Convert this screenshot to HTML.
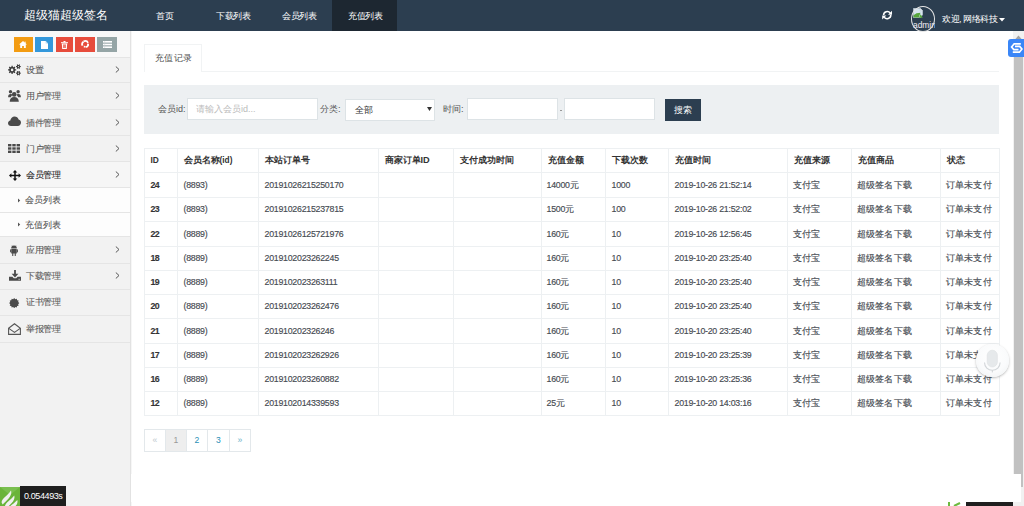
<!DOCTYPE html>
<html><head><meta charset="utf-8">
<style>
*{box-sizing:border-box;margin:0;padding:0}
html,body{width:1024px;height:506px;overflow:hidden;background:#fff;font-family:"Liberation Sans",sans-serif;color:#555}
.abs{position:absolute}
#hdr{position:absolute;left:0;top:0;width:1024px;height:31px;background:#2c3e50}
#hdr .t{position:absolute;color:#fff;white-space:nowrap;line-height:1}
#logo{left:24px;top:9px;font-size:12px}
.nav{top:12px;font-size:9px;letter-spacing:-.5px}
#navact{position:absolute;left:332px;top:0;width:65px;height:31px;background:#1d2731}
#side{position:absolute;left:0;top:31px;width:130px;height:475px;background:#f2f2f2}
.sc{position:absolute;top:6px;height:15px}
.mi{position:absolute;left:0;width:130px;border-bottom:1px solid #e2e2e2}
.mt{font-size:9px;letter-spacing:-0.5px;-webkit-text-stroke:.08px currentColor;line-height:10px;white-space:nowrap}
.mi .tx{position:absolute;left:26px;font-size:9px;color:#555;line-height:1;white-space:nowrap}
.mi .ch{position:absolute;left:115px;width:5px;height:6px}
.mi svg.ic{position:absolute}
#content{position:absolute;left:131px;top:31px;width:882px;height:475px;background:#fff}
.tbl{position:absolute;left:144px;top:148px;border-collapse:collapse;table-layout:fixed}
.tbl td,.tbl th{border:1px solid #edf0f2;padding:0 0 2px 5.5px;line-height:12px;text-align:left;white-space:nowrap;overflow:hidden;font-weight:normal;vertical-align:middle}
.tbl th{font-weight:bold;color:#333;font-size:9.2px}
.tbl td{color:#464b52;-webkit-text-stroke:.15px #464b52;font-size:9.2px;padding-bottom:1px;padding-left:4.5px;letter-spacing:.25px}
.tbl td.l{padding-left:5.5px}
.tbl td.l,.tbl .l{font-size:8.8px;letter-spacing:-.25px}
.l{letter-spacing:-0.5px}
.tbl td.b{font-weight:bold;color:#333;letter-spacing:-.6px}
.lb{font-size:9.2px;color:#555;line-height:1;white-space:nowrap}
.l2{font-size:9px}
.inp{background:#fff;border:1px solid #dde3e6}
.pg{top:429px;height:23px;border:1px solid #e3e8eb;font-size:8.6px;line-height:21px;text-align:center;background:#fff}
</style></head><body>
<div id="hdr">
  <div class="t" id="logo">超级猫超级签名</div>
  <div id="navact"></div>
  <div class="t nav" style="left:156px">首页</div>
  <div class="t nav" style="left:216px">下载列表</div>
  <div class="t nav" style="left:282px">会员列表</div>
  <div class="t nav" style="left:348px">充值列表</div>
  <!-- refresh -->
  <svg class="abs" style="left:882px;top:10px" width="10.4" height="10.2" viewBox="0 0 10.4 10.2"><g fill="none" stroke="#fff" stroke-width="1.6"><path d="M1.6 5.1A3.6 3.6 0 0 1 8.2 3.1"/><path d="M8.8 5.1A3.6 3.6 0 0 1 2.2 7.1"/></g><g fill="#fff"><path d="M10.2 0.6V4.8H6z"/><path d="M0.2 9.6V5.4H4.4z"/></g></svg>
  <div class="abs" style="left:911px;top:6px;width:23.5px;height:26px;overflow:hidden">
  <svg class="abs" style="left:1.5px;top:2px" width="10" height="10" viewBox="0 0 10 10"><path d="M0.3 0.3H7.2L9.7 2.8V6.5L7.5 9.7H0.3Z" fill="#d6e4ef" stroke="#b8c4cc" stroke-width="0.5"/><path d="M0.5 9.5V7.2L3.5 5.2 7.5 4.8 5.8 9.5Z" fill="#56a53c"/><path d="M7.2 0.3V2.8H9.7" fill="#eef3f6" stroke="#b8c4cc" stroke-width="0.5"/><path d="M7.6 6.2L9.8 9.8H6" fill="#56a53c"/></svg>
  <div class="t" style="left:2px;top:15px;font-size:8.4px;color:#f4eef6">admin</div>
</div>
<div class="abs" style="left:911px;top:6px;width:24px;height:26px;border:1.2px solid #e6e6e6;border-radius:50%"></div>
<div class="t" style="left:942px;top:14.5px;font-size:9px;letter-spacing:-0.45px">欢迎, 网络科技</div>
  <svg class="abs" style="left:999px;top:18px" width="6" height="4" viewBox="0 0 6 4"><path d="M0 0 H6 L3 3.5 Z" fill="#fff"/></svg>
</div>

<div id="side">
<div class="abs" style="left:0;top:0;width:130px;height:26px;background:#f8f8f8"></div>
<div class="sc" style="left:14px;width:19px;background:#f39c12"></div>
<div class="sc" style="left:35px;width:18px;background:#3498db"></div>
<div class="sc" style="left:56px;width:17px;background:#e74c3c"></div>
<div class="sc" style="left:75px;width:20px;background:#e74c3c"></div>
<div class="sc" style="left:97px;width:20px;background:#95a5a6"></div>
</div>
<div class="abs" style="left:130px;top:31px;width:1px;height:475px;background:#e2e2e2"></div><div class="abs" style="left:131px;top:31px;width:1px;height:475px;background:#f6f6f6"></div>
<svg class="abs" style="left:19px;top:41px" width="8" height="7" viewBox="0 0 8 7"><path fill="#fff" d="M4 0L8 3.6H6.8V7H4.9V5H3.1V7H1.2V3.6H0z"/><rect x="5.6" y="0.6" width="1" height="1.8" fill="#fff"/></svg>
<svg class="abs" style="left:41px;top:40.5px" width="7" height="8" viewBox="0 0 7 8"><path fill="#fff" d="M0 0H4.6L7 2.4V8H0z"/><path fill="#b9dcf3" d="M4.6 0V2.4H7z"/></svg>
<svg class="abs" style="left:61px;top:40.5px" width="7" height="8" viewBox="0 0 7 8"><g fill="#fff"><rect x="0" y="1.2" width="7" height="1"/><rect x="2.5" y="0" width="2" height="1.2"/><path d="M.8 2.6H6.2L5.8 8H1.2z"/></g><g fill="#e74c3c"><rect x="2" y="3.4" width=".7" height="3.6"/><rect x="3.15" y="3.4" width=".7" height="3.6"/><rect x="4.3" y="3.4" width=".7" height="3.6"/></g></svg>
<svg class="abs" style="left:81px;top:40.2px" width="8.4" height="8" viewBox="0 0 8.4 8"><g fill="none" stroke="#fff" stroke-width="1.8"><path d="M1.5 5.6A3.1 3.1 0 0 1 2.4 1.7"/><path d="M3.4 1.1A3.1 3.1 0 0 1 7 2.8"/><path d="M7.3 4.3A3.1 3.1 0 0 1 4.6 7.1"/></g><g fill="#fff"><path d="M2.6 0.1L4.6 1.3 2.4 2.8z"/><path d="M8.2 4.9L6.9 2.9 6 5.1z"/><path d="M2.9 7.9L4.8 6.4 2.8 5.5z"/></g></svg>
<svg class="abs" style="left:103px;top:40.7px" width="9" height="7" viewBox="0 0 9 7"><g fill="#fff"><rect x="0" y="0" width="9" height="1.6"/><rect x="0" y="2.7" width="9" height="1.6"/><rect x="0" y="5.4" width="9" height="1.6"/></g><g fill="#c8d0d0"><rect x="1.6" y="0" width=".5" height="7"/></g></svg>
<div class="abs" style="left:0;top:57px;width:130px;height:25px;background:#f2f2f2"></div>
<div class="abs" style="left:0;top:82px;width:130px;height:27px;background:#f2f2f2"></div>
<div class="abs" style="left:0;top:109px;width:130px;height:26px;background:#f2f2f2"></div>
<div class="abs" style="left:0;top:135px;width:130px;height:26px;background:#f2f2f2"></div>
<div class="abs" style="left:0;top:161px;width:130px;height:26px;background:#f6f6f6"></div>
<div class="abs" style="left:0;top:187px;width:130px;height:25px;background:#fdfdfd"></div>
<div class="abs" style="left:0;top:212px;width:130px;height:24px;background:#fdfdfd"></div>
<div class="abs" style="left:0;top:236px;width:130px;height:27px;background:#f2f2f2"></div>
<div class="abs" style="left:0;top:263px;width:130px;height:26px;background:#f2f2f2"></div>
<div class="abs" style="left:0;top:289px;width:130px;height:26px;background:#f2f2f2"></div>
<div class="abs" style="left:0;top:315px;width:130px;height:27px;background:#f2f2f2"></div>
<div class="abs" style="left:0;top:57px;width:130px;height:1px;background:#e5e5e5"></div>
<div class="abs" style="left:0;top:82px;width:130px;height:1px;background:#e5e5e5"></div>
<div class="abs" style="left:0;top:109px;width:130px;height:1px;background:#e5e5e5"></div>
<div class="abs" style="left:0;top:135px;width:130px;height:1px;background:#e5e5e5"></div>
<div class="abs" style="left:0;top:161px;width:130px;height:1px;background:#e5e5e5"></div>
<div class="abs" style="left:0;top:187px;width:130px;height:1px;background:#e5e5e5"></div>
<div class="abs" style="left:0;top:212px;width:130px;height:1px;background:#e5e5e5"></div>
<div class="abs" style="left:0;top:236px;width:130px;height:1px;background:#e5e5e5"></div>
<div class="abs" style="left:0;top:263px;width:130px;height:1px;background:#e5e5e5"></div>
<div class="abs" style="left:0;top:289px;width:130px;height:1px;background:#e5e5e5"></div>
<div class="abs" style="left:0;top:315px;width:130px;height:1px;background:#e5e5e5"></div>
<div class="abs" style="left:0;top:342px;width:130px;height:1px;background:#e5e5e5"></div>
<div class="abs mt" style="left:26px;top:64.5px; color:#555">设置</div>
<svg class="abs" style="left:115px;top:65.5px" width="5" height="7" viewBox="0 0 5 7"><path d="M.8.5L4 3.5.8 6.5" fill="none" stroke="#555" stroke-width="1"/></svg>
<svg class="abs" style="left:7px;top:64px" width="14" height="12" viewBox="0 0 14 12"><path fill="#3a3a3a" fill-rule="evenodd" d="M8.01 5.19 L9.16 5.31 L9.16 6.49 L8.01 6.61 L7.66 7.46 L8.39 8.35 L7.55 9.19 L6.66 8.46 L5.81 8.81 L5.69 9.96 L4.51 9.96 L4.39 8.81 L3.54 8.46 L2.65 9.19 L1.81 8.35 L2.54 7.46 L2.19 6.61 L1.04 6.49 L1.04 5.31 L2.19 5.19 L2.54 4.34 L1.81 3.45 L2.65 2.61 L3.54 3.34 L4.39 2.99 L4.51 1.84 L5.69 1.84 L5.81 2.99 L6.66 3.34 L7.55 2.61 L8.39 3.45 L7.66 4.34Z M6.40 5.90 A1.3 1.3 0 1 0 3.80 5.90 A1.3 1.3 0 1 0 6.40 5.90Z M13.00 2.02 L13.74 2.08 L13.74 3.12 L13.00 3.18 L12.70 3.70 L13.02 4.37 L12.12 4.89 L11.70 4.27 L11.10 4.27 L10.68 4.89 L9.78 4.37 L10.10 3.70 L9.80 3.18 L9.06 3.12 L9.06 2.08 L9.80 2.02 L10.10 1.50 L9.78 0.83 L10.68 0.31 L11.10 0.93 L11.70 0.93 L12.12 0.31 L13.02 0.83 L12.70 1.50Z M12.00 2.60 A0.6 0.6 0 1 0 10.80 2.60 A0.6 0.6 0 1 0 12.00 2.60Z M13.00 8.62 L13.74 8.68 L13.74 9.72 L13.00 9.78 L12.70 10.30 L13.02 10.97 L12.12 11.49 L11.70 10.87 L11.10 10.87 L10.68 11.49 L9.78 10.97 L10.10 10.30 L9.80 9.78 L9.06 9.72 L9.06 8.68 L9.80 8.62 L10.10 8.10 L9.78 7.43 L10.68 6.91 L11.10 7.53 L11.70 7.53 L12.12 6.91 L13.02 7.43 L12.70 8.10Z M12.00 9.20 A0.6 0.6 0 1 0 10.80 9.20 A0.6 0.6 0 1 0 12.00 9.20Z"/></svg>
<div class="abs mt" style="left:26px;top:90.5px; color:#555">用户管理</div>
<svg class="abs" style="left:115px;top:91.5px" width="5" height="7" viewBox="0 0 5 7"><path d="M.8.5L4 3.5.8 6.5" fill="none" stroke="#555" stroke-width="1"/></svg>
<svg class="abs" style="left:7px;top:88px" width="15" height="15" viewBox="0 0 15 15"><g fill="#4a4a4a"><circle cx="3.5" cy="3.7" r="1.7"/><circle cx="11.1" cy="3.7" r="1.7"/><path d="M1.1 9.2c0-2.2.9-3.3 2.4-3.3 1 0 1.6.4 2 1-.9.6-1.4 1.3-1.6 2.3z"/><path d="M13.9 9.2c0-2.2-.9-3.3-2.4-3.3-1 0-1.6.4-2 1 .9.6 1.4 1.3 1.6 2.3z"/><circle cx="7.2" cy="6.4" r="2.3"/><path d="M2.7 13.8c0-3.2 1.6-4.9 4.5-4.9s4.6 1.7 4.6 4.9z"/></g></svg>
<div class="abs mt" style="left:26px;top:117.5px; color:#555">插件管理</div>
<svg class="abs" style="left:115px;top:118.5px" width="5" height="7" viewBox="0 0 5 7"><path d="M.8.5L4 3.5.8 6.5" fill="none" stroke="#555" stroke-width="1"/></svg>
<svg class="abs" style="left:8px;top:116px" width="13" height="10" viewBox="0 0 13 10"><path fill="#4a4a4a" d="M3 10C1.3 10 0 8.8 0 7.2 0 5.8 1 4.7 2.3 4.5 2.6 2.2 4.4.5 6.6.5c1.9 0 3.5 1.3 4 3.1 1.4.3 2.4 1.5 2.4 3C13 8.5 11.6 10 9.8 10z"/></svg>
<div class="abs mt" style="left:26px;top:144.0px; color:#555">门户管理</div>
<svg class="abs" style="left:115px;top:145.0px" width="5" height="7" viewBox="0 0 5 7"><path d="M.8.5L4 3.5.8 6.5" fill="none" stroke="#555" stroke-width="1"/></svg>
<svg class="abs" style="left:8px;top:144px" width="12" height="9" viewBox="0 0 12 9"><g fill="#4a4a4a"><rect x="0" y="0" width="3.4" height="2.4"/><rect x="4.3" y="0" width="3.4" height="2.4"/><rect x="8.6" y="0" width="3.4" height="2.4"/><rect x="0" y="3.3" width="3.4" height="2.4"/><rect x="4.3" y="3.3" width="3.4" height="2.4"/><rect x="8.6" y="3.3" width="3.4" height="2.4"/><rect x="0" y="6.6" width="3.4" height="2.4"/><rect x="4.3" y="6.6" width="3.4" height="2.4"/><rect x="8.6" y="6.6" width="3.4" height="2.4"/></g></svg>
<div class="abs mt" style="left:26px;top:170.0px;color:#222">会员管理</div>
<svg class="abs" style="left:115px;top:171.0px" width="5" height="7" viewBox="0 0 5 7"><path d="M.8.5L4 3.5.8 6.5" fill="none" stroke="#555" stroke-width="1"/></svg>
<svg class="abs" style="left:8.5px;top:170px" width="12" height="11" viewBox="0 0 12 11"><g fill="#111"><rect x="5.25" y="1.8" width="1.5" height="7.4"/><rect x="1.8" y="4.75" width="8.4" height="1.5"/><path d="M6 0L8.3 2.4H3.7z"/><path d="M6 11L8.3 8.6H3.7z"/><path d="M0 5.5L2.4 3.2V7.8z"/><path d="M12 5.5L9.6 3.2V7.8z"/></g></svg>
<div class="abs mt" style="left:24.5px;top:195.0px;letter-spacing:0; color:#555">会员列表</div>
<svg class="abs" style="left:17.5px;top:197.5px" width="3" height="5" viewBox="0 0 3 5"><path d="M0 .5L2.2 2.5 0 4.5z" fill="#555"/></svg>
<div class="abs mt" style="left:24.5px;top:219.5px;letter-spacing:0; color:#555">充值列表</div>
<svg class="abs" style="left:17.5px;top:222.0px" width="3" height="5" viewBox="0 0 3 5"><path d="M0 .5L2.2 2.5 0 4.5z" fill="#555"/></svg>
<div class="abs mt" style="left:26px;top:245.0px; color:#555">应用管理</div>
<svg class="abs" style="left:115px;top:246.0px" width="5" height="7" viewBox="0 0 5 7"><path d="M.8.5L4 3.5.8 6.5" fill="none" stroke="#555" stroke-width="1"/></svg>
<svg class="abs" style="left:10px;top:244px" width="8" height="12" viewBox="0 0 8 12"><g fill="#4a4a4a"><path d="M1.2 4.4A2.8 2.8 0 0 1 6.8 4.4z"/><rect x="1.2" y="5" width="5.6" height="4.6" rx=".5"/><rect x="0" y="5" width="0.9" height="3.4" rx=".45"/><rect x="7.1" y="5" width="0.9" height="3.4" rx=".45"/><rect x="2.2" y="9" width="1.1" height="3" rx=".5"/><rect x="4.7" y="9" width="1.1" height="3" rx=".5"/><path d="M2 1.4l.8 1.3M6 1.4l-.8 1.3" stroke="#4a4a4a" stroke-width=".5"/></g></svg>
<div class="abs mt" style="left:26px;top:271.0px; color:#555">下载管理</div>
<svg class="abs" style="left:115px;top:272.0px" width="5" height="7" viewBox="0 0 5 7"><path d="M.8.5L4 3.5.8 6.5" fill="none" stroke="#555" stroke-width="1"/></svg>
<svg class="abs" style="left:8.8px;top:270.3px" width="12" height="11" viewBox="0 0 12 11"><g fill="#4a4a4a"><rect x="5.1" y="0" width="1.8" height="4.2"/><path d="M2.6 3.8h6.8L6 7.4z"/><path d="M0 6.8h3.4l1.4 1.5h2.4L8.6 6.8H12v4H0z"/></g><rect x="9.6" y="8.8" width="1" height="1" fill="#f2f2f2"/></svg>
<div class="abs mt" style="left:26px;top:297.0px; color:#555">证书管理</div>
<svg class="abs" style="left:9.3px;top:297.6px" width="10.4" height="10.2" viewBox="0 0 10.4 10.2"><path fill="#4a4a4a" d="M5.20 0.00 L6.26 1.14 L7.75 0.68 L8.10 2.20 L9.62 2.55 L9.16 4.04 L10.30 5.10 L9.16 6.16 L9.62 7.65 L8.10 8.00 L7.75 9.52 L6.26 9.06 L5.20 10.20 L4.14 9.06 L2.65 9.52 L2.30 8.00 L0.78 7.65 L1.24 6.16 L0.10 5.10 L1.24 4.04 L0.78 2.55 L2.30 2.20 L2.65 0.68 L4.14 1.14Z"/></svg>
<div class="abs mt" style="left:26px;top:323.5px; color:#555">举报管理</div>
<svg class="abs" style="left:8px;top:323px" width="13" height="12" viewBox="0 0 13 12"><g fill="none" stroke="#555" stroke-width="1.1"><path d="M.6 5.2L6.5.7l5.9 4.5v6.2H.6z"/><path d="M.8 5.4l5.7 4 5.7-4"/></g></svg>
<!-- tabs -->
<div class="abs" style="left:201px;top:71px;width:798px;height:1px;background:#f1f3f4"></div>
<div class="abs" style="left:144px;top:44px;width:58px;height:28px;border:1px solid #f1f3f4;border-bottom:none;background:#fff"></div>
<div class="abs" style="left:155px;top:53px;font-size:9.4px;letter-spacing:.35px;color:#505050;line-height:1">充值记录</div>

<!-- search -->
<div class="abs" style="left:144px;top:85px;width:855px;height:49px;background:#edf0f2"></div>
<div class="abs lb" style="left:158px;top:105px">会员<span class="l2">id:</span></div>
<div class="abs inp" style="left:187px;top:98px;width:131px;height:22px"></div>
<div class="abs" style="left:196px;top:105px;font-size:8.6px;color:#bbb;line-height:1;white-space:nowrap">请输入会员<span style="font-size:9px">id...</span></div>
<div class="abs lb" style="left:320px;top:105px">分类:</div>
<div class="abs inp" style="left:345px;top:99px;width:90px;height:22px"></div>
<div class="abs" style="left:355px;top:106px;font-size:9.2px;color:#333;line-height:1">全部</div>
<svg class="abs" style="left:427px;top:107px" width="5" height="4" viewBox="0 0 5 4"><path d="M0 0H5L2.5 4Z" fill="#333"/></svg>
<div class="abs lb" style="left:443px;top:105px">时间:</div>
<div class="abs inp" style="left:467px;top:98px;width:91px;height:22px"></div>
<div class="abs" style="left:560px;top:109.5px;width:2px;height:1px;background:#999"></div>
<div class="abs inp" style="left:564px;top:98px;width:91px;height:22px"></div>
<div class="abs" style="left:665px;top:99px;width:36px;height:22px;background:#2c3e50"></div>
<div class="abs" style="left:674px;top:106px;font-size:9.2px;color:#fff;line-height:1">搜索</div>

<!-- scrollbar -->
<div class="abs" style="left:1013px;top:31px;width:11px;height:475px;background:#f1f1f1"></div>
<svg class="abs" style="left:1015px;top:35px" width="7" height="5" viewBox="0 0 7 5"><path d="M0 4.5L3.5 0.5 7 4.5z" fill="#a3a3a3"/></svg>
<div class="abs" style="left:1014px;top:50px;width:9px;height:424px;background:#c1c1c1"></div>
<div class="abs" style="left:131px;top:474px;width:890px;height:28px;background:#fff"></div><div class="abs" style="left:1021px;top:474px;width:2px;height:13px;background:#c1c1c1"></div>
<!-- S badge -->
<div class="abs" style="left:1008px;top:39px;width:18px;height:17.5px;background:#3a86f7;border-radius:3px 0 0 3px"></div>
<svg class="abs" style="left:1008px;top:39px" width="16" height="17" viewBox="0 0 16 17"><g fill="none" stroke="#fff" stroke-width="1.7" stroke-linejoin="miter" stroke-linecap="butt"><path d="M12.8 4.8H6.2L3.6 8 5.8 10.6H10.5"/><path d="M4.8 13.2H11.4L13.9 10 11.7 7.4H7"/></g></svg>
<!-- bottom widgets -->
<div class="abs" style="left:0;top:486.5px;width:20px;height:19.5px;background:#6ab43a;overflow:hidden"><svg width="20" height="20" viewBox="0 0 20 20"><path d="M0 0H20L10 8z" fill="#86c860" opacity=".55"/><g fill="#f0f0f0"><path d="M1.6 15.5C1.8 11.5 6.5 9.8 11 3.5 12.3 7.5 9.5 11.5 2.6 17.5Z"/><path d="M4.8 20C5.2 15.5 10 13.8 14.2 8.5 15.5 12.5 12.5 16 6.5 21Z"/><path d="M9 21C9.8 18.5 14 16.8 17.3 13 18.2 16.5 16 19.5 12.5 21Z"/></g></svg></div>
<div class="abs" style="left:20px;top:486px;width:46px;height:20px;background:#1f1f1f"></div>
<div class="abs" style="left:24px;top:492px;font-size:9px;letter-spacing:-0.4px;color:#fff;line-height:9px;white-space:nowrap">0.054493s</div>
<div class="abs" style="left:946px;top:502px;width:20px;height:4px;background:#fff;overflow:hidden"><svg width="20" height="20" viewBox="0 0 20 20"><g fill="none" stroke="#6cba3f" stroke-width="2"><path d="M3 0V4"/><path d="M8 4L14 1"/></g></svg></div>
<div class="abs" style="left:966px;top:502px;width:47px;height:4px;background:#1f1f1f"></div>

<!-- pagination -->
<div class="abs pg" style="left:144px;width:22px;color:#bcc8cc">«</div>
<div class="abs pg" style="left:165px;width:22px;background:#eee;color:#999">1</div>
<div class="abs pg" style="left:186px;width:22px;color:#2a8fb6">2</div>
<div class="abs pg" style="left:207px;width:23px;color:#2a8fb6">3</div>
<div class="abs pg" style="left:229px;width:22px;color:#6ab0c8">»</div>

<table class="tbl">
<colgroup><col style="width:33px"><col style="width:81px"><col style="width:120px"><col style="width:75px"><col style="width:88px"><col style="width:64px"><col style="width:63px"><col style="width:119px"><col style="width:64px"><col style="width:89px"><col style="width:59px"></colgroup>
<tr style="height:24px"><th style="font-size:8.4px">ID</th><th>会员名称<span style="font-size:8.3px">(id)</span></th><th>本站订单号</th><th>商家订单ID</th><th>支付成功时间</th><th>充值金额</th><th>下载次数</th><th>充值时间</th><th>充值来源</th><th>充值商品</th><th>状态</th></tr>
<tr style="height:25px"><td class="b l">24</td><td class="l">(8893)</td><td class="l">20191026215250170</td><td></td><td></td><td><span class="l">14000</span>元</td><td class="l">1000</td><td class="l">2019-10-26 21:52:14</td><td>支付宝</td><td>超级签名下载</td><td>订单未支付</td></tr>
<tr style="height:24px"><td class="b l">23</td><td class="l">(8893)</td><td class="l">20191026215237815</td><td></td><td></td><td><span class="l">1500</span>元</td><td class="l">100</td><td class="l">2019-10-26 21:52:02</td><td>支付宝</td><td>超级签名下载</td><td>订单未支付</td></tr>
<tr style="height:25px"><td class="b l">22</td><td class="l">(8889)</td><td class="l">20191026125721976</td><td></td><td></td><td><span class="l">160</span>元</td><td class="l">10</td><td class="l">2019-10-26 12:56:45</td><td>支付宝</td><td>超级签名下载</td><td>订单未支付</td></tr>
<tr style="height:24px"><td class="b l">18</td><td class="l">(8889)</td><td class="l">2019102023262245</td><td></td><td></td><td><span class="l">160</span>元</td><td class="l">10</td><td class="l">2019-10-20 23:25:40</td><td>支付宝</td><td>超级签名下载</td><td>订单未支付</td></tr>
<tr style="height:24px"><td class="b l">19</td><td class="l">(8889)</td><td class="l">2019102023263111</td><td></td><td></td><td><span class="l">160</span>元</td><td class="l">10</td><td class="l">2019-10-20 23:25:40</td><td>支付宝</td><td>超级签名下载</td><td>订单未支付</td></tr>
<tr style="height:24px"><td class="b l">20</td><td class="l">(8889)</td><td class="l">2019102023262476</td><td></td><td></td><td><span class="l">160</span>元</td><td class="l">10</td><td class="l">2019-10-20 23:25:40</td><td>支付宝</td><td>超级签名下载</td><td>订单未支付</td></tr>
<tr style="height:25px"><td class="b l">21</td><td class="l">(8889)</td><td class="l">201910202326246</td><td></td><td></td><td><span class="l">160</span>元</td><td class="l">10</td><td class="l">2019-10-20 23:25:40</td><td>支付宝</td><td>超级签名下载</td><td>订单未支付</td></tr>
<tr style="height:24px"><td class="b l">17</td><td class="l">(8889)</td><td class="l">2019102023262926</td><td></td><td></td><td><span class="l">160</span>元</td><td class="l">10</td><td class="l">2019-10-20 23:25:39</td><td>支付宝</td><td>超级签名下载</td><td>订单未支付</td></tr>
<tr style="height:24px"><td class="b l">16</td><td class="l">(8889)</td><td class="l">2019102023260882</td><td></td><td></td><td><span class="l">160</span>元</td><td class="l">10</td><td class="l">2019-10-20 23:25:36</td><td>支付宝</td><td>超级签名下载</td><td>订单未支付</td></tr>
<tr style="height:24px"><td class="b l">12</td><td class="l">(8889)</td><td class="l">2019102014339593</td><td></td><td></td><td><span class="l">25</span>元</td><td class="l">10</td><td class="l">2019-10-20 14:03:16</td><td>支付宝</td><td>超级签名下载</td><td>订单未支付</td></tr>
</table>
<!-- mic -->
<div class="abs" style="left:976px;top:344px;width:32.5px;height:32.5px;border-radius:50%;background:radial-gradient(circle at 50% 40%,#ffffff 0,#fafbfc 55%,#eef1f2 100%);box-shadow:0 1px 2.5px rgba(0,0,0,.28)"></div>
<svg class="abs" style="left:983px;top:349px" width="19" height="24" viewBox="0 0 19 24"><rect x="4.2" y="1.2" width="10.2" height="16.8" rx="5.1" fill="#e6e9eb" stroke="#dde1e3" stroke-width=".6"/><path d="M1.5 13.5a7.8 7.8 0 0 0 15.6 0" fill="none" stroke="#d2d6d9" stroke-width="1.1"/><rect x="8.8" y="21" width="1.1" height="2.4" fill="#d2d6d9"/></svg>
</body></html>
